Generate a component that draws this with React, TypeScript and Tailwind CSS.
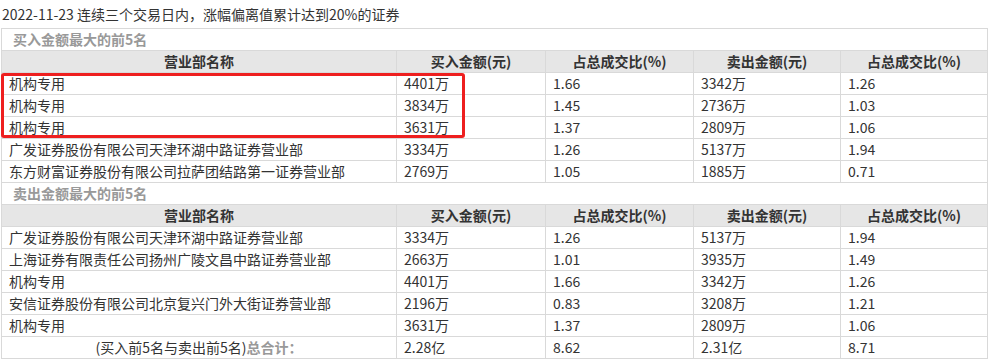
import React from "react";

type Row = [string, string, string, string, string];

const buyRows: Row[] = [
  ["机构专用", "4401万", "1.66", "3342万", "1.26"],
  ["机构专用", "3834万", "1.45", "2736万", "1.03"],
  ["机构专用", "3631万", "1.37", "2809万", "1.06"],
  ["广发证券股份有限公司天津环湖中路证券营业部", "3334万", "1.26", "5137万", "1.94"],
  ["东方财富证券股份有限公司拉萨团结路第一证券营业部", "2769万", "1.05", "1885万", "0.71"],
];

const sellRows: Row[] = [
  ["广发证券股份有限公司天津环湖中路证券营业部", "3334万", "1.26", "5137万", "1.94"],
  ["上海证券有限责任公司扬州广陵文昌中路证券营业部", "2663万", "1.01", "3935万", "1.49"],
  ["机构专用", "4401万", "1.66", "3342万", "1.26"],
  ["安信证券股份有限公司北京复兴门外大街证券营业部", "2196万", "0.83", "3208万", "1.21"],
  ["机构专用", "3631万", "1.37", "2809万", "1.06"],
];

const headers = ["营业部名称", "买入金额(元)", "占总成交比(%)", "卖出金额(元)", "占总成交比(%)"];

const gridCols = "grid grid-cols-[395px_149px_148px_147px_147px]";

function SectionRow({ title }: { title: string }) {
  return (
    <div className="h-[22px] border-b border-r border-[#d9d9d9] bg-white flex items-center pl-[11px] text-[14px] font-bold text-[#999999]">
      {title}
    </div>
  );
}

function HeaderRow() {
  return (
    <div className={`${gridCols} h-[22px] bg-[#e6e6e6]`}>
      {headers.map((h, i) => (
        <div
          key={i}
          className="border-b border-r border-[#d9d9d9] flex items-center justify-center text-[14px] font-bold text-[#333333]"
        >
          {h}
        </div>
      ))}
    </div>
  );
}

function DataRow({ row }: { row: Row }) {
  return (
    <div className={`${gridCols} h-[22px] bg-white`}>
      {row.map((c, i) => (
        <div
          key={i}
          className="border-b border-r border-[#d9d9d9] flex items-center pl-[7px] text-[14px] text-[#333333] whitespace-nowrap overflow-hidden"
        >
          {c}
        </div>
      ))}
    </div>
  );
}

export default function App() {
  return (
    <div
      className="w-[991px] h-[363px] bg-white relative overflow-hidden"
      style={{ fontFamily: '"SimSun", "Noto Sans CJK SC", sans-serif' }}
    >
      <div className="h-[28px] pl-[2px] pt-[4px] text-[14px] leading-[20px] text-[#333333]">
        2022-11-23 连续三个交易日内，涨幅偏离值累计达到20%的证券
      </div>
      <div className="ml-[1px] w-[987px] border-t border-l border-[#d9d9d9]">
        <SectionRow title="买入金额最大的前5名" />
        <HeaderRow />
        {buyRows.map((r, i) => (
          <DataRow key={"b" + i} row={r} />
        ))}
        <SectionRow title="卖出金额最大的前5名" />
        <HeaderRow />
        {sellRows.map((r, i) => (
          <DataRow key={"s" + i} row={r} />
        ))}
        <div className={`${gridCols} h-[22px] bg-white`}>
          <div className="border-b border-r border-[#d9d9d9] flex items-center justify-center text-[14px] text-[#333333]">
            (买入前5名与卖出前5名)<span className="font-bold text-[#999999]">总合计：</span>
          </div>
          {["2.28亿", "8.62", "2.31亿", "8.71"].map((c, i) => (
            <div
              key={i}
              className="border-b border-r border-[#d9d9d9] flex items-center pl-[7px] text-[14px] text-[#333333]"
            >
              {c}
            </div>
          ))}
        </div>
      </div>
      <div className="absolute left-[1px] top-[73px] w-[464px] h-[65px] border-[3px] border-[#ee1f1f] rounded-[3px] pointer-events-none" />
    </div>
  );
}
